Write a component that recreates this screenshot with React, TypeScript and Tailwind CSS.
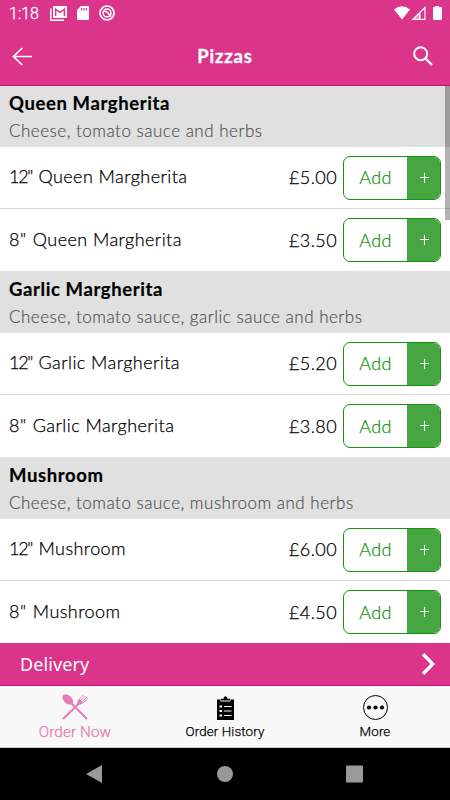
import React from 'react';

type Option = {
  size: string;
  price: string;
};

type Pizza = {
  name: string;
  description: string;
  options: Option[];
};

const pizzas: Pizza[] = [
  {
    name: 'Queen Margherita',
    description: 'Cheese, tomato sauce and herbs',
    options: [
      { size: '12"', price: '£5.00' },
      { size: '8"', price: '£3.50' },
    ],
  },
  {
    name: 'Garlic Margherita',
    description: 'Cheese, tomato sauce, garlic sauce and herbs',
    options: [
      { size: '12"', price: '£5.20' },
      { size: '8"', price: '£3.80' },
    ],
  },
  {
    name: 'Mushroom',
    description: 'Cheese, tomato sauce, mushroom and herbs',
    options: [
      { size: '12"', price: '£6.00' },
      { size: '8"', price: '£4.50' },
    ],
  },
];

const StatusBar: React.FC = () => {
  return (
    <div className="flex h-[26px] items-center pl-[9px] pr-[8px] font-[Roboto,sans-serif]">
      <span className="w-[41px] pt-[2px] text-[16px] font-light leading-none [-webkit-text-stroke:0.3px]">1:18</span>
      <svg width="17" height="15" viewBox="0 0 17 15" className="shrink-0">
        <path d="M.8 2.500v11.700H14" fill="none" stroke="#fff" strokeWidth="1.500" />
        <rect x="3" width="14" height="12" rx="1.200" fill="#fff" />
        <path d="M5.600 10V3.200L10 6.300l4.400-3.100V10" fill="none" stroke="#da358b" strokeWidth="1.500" />
      </svg>
      <svg width="12" height="14" viewBox="0 0 12 14" className="ml-[10px] shrink-0">
        <path fill="#fff" d="M4 0h6.700Q12 0 12 1.300v11.400Q12 14 10.700 14H1.300Q0 14 0 12.700V4Z" />
        <path stroke="#da358b" strokeWidth="1.200" d="M4.600 2v2.600M7 2v2.600M9.400 2v2.600" />
      </svg>
      <svg width="16" height="16" viewBox="0 0 16 16" fill="none" stroke="#fff" className="ml-[10px] shrink-0">
        <circle cx="8" cy="8" r="7" strokeWidth="1.700" />
        <circle cx="8" cy="8" r="3.900" strokeWidth="1.500" />
        <path d="M5 6 8 7l4 4.500" strokeWidth="1.700" />
      </svg>
      <svg width="48" height="15" viewBox="0 0 48 15" fill="#fff" className="ml-auto shrink-0">
        <path d="M0 3.500Q8-3.200 16 3.500L8 13.500Z" />
        <path fillRule="evenodd" d="M31.500 0v14H17.500ZM30.300 3V12.800H20.400Z" />
        <path d="M25 8.300 26.500 6.700V13H25Z" />
        <path d="M17.500 14 25 6.500V14Z" fillOpacity=".45" />
        <path d="M41 0h4v1h2q1 0 1 1v11q0 1-1 1h-7q-1 0-1-1V2q0-1 1-1h1Z" />
      </svg>
    </div>
  );
};

const Header: React.FC = () => {
  return (
    <header className="z-10 h-[86px] shrink-0 border-b border-[#d40a7c] bg-[#da358b] text-white">
      <StatusBar />
      <div className="grid h-[60px] grid-cols-[40px_1fr_40px] items-center px-[12px]">
        <svg width="20" height="19" viewBox="0 0 20 19" fill="none" stroke="#fff" strokeWidth="1.700">
          <path d="M10.300 1 1.500 9.500 10.300 18M1.500 9.500H20" />
        </svg>
        <h1 className="pt-px text-center text-[18.500px] font-bold tracking-[0.800px] [-webkit-text-stroke:0.3px]">Pizzas</h1>
        <svg width="20" height="20" viewBox="0 0 20 20" fill="none" stroke="#fff" className="ml-auto mr-[5px]">
          <circle cx="7.700" cy="7.700" r="6.500" strokeWidth="2" />
          <path d="m12.500 12.500 6.500 6.500" strokeWidth="2.400" />
        </svg>
      </div>
    </header>
  );
};

const AddButton: React.FC = () => {
  return (
    <button className="ml-[6px] flex h-[44px] w-[98px] overflow-hidden rounded-[7px] border border-[#16920f]">
      <span className="flex h-full flex-1 items-center justify-center tracking-[0.400px] text-[#16920f]">Add</span>
      <span className="flex h-full w-[33px] items-center justify-center bg-[#46a642]">
        <svg width="9" height="10" viewBox="0 0 9 10" stroke="#fff" strokeWidth="1.100" className="ml-[2px]">
          <path d="M4.500 0v10M0 4.500h9" />
        </svg>
      </span>
    </button>
  );
};

const PizzaSection: React.FC<{ pizza: Pizza }> = ({ pizza }) => {
  return (
    <section>
      <div className="h-[62px] bg-[#e0e0e0] px-[9px] pt-[5px]">
        <h2 className="text-[18.500px] font-bold leading-[26px] tracking-[0.600px] [-webkit-text-stroke:0.2px]">{pizza.name}</h2>
        <p className="pt-px text-[17px] font-light leading-[28px] tracking-[0.500px] text-[#555] [-webkit-text-stroke:0.2px]">
          {pizza.description}
        </p>
      </div>
      {pizza.options.map((option) => (
        <div
          key={option.size}
          className="flex h-[62px] items-center border-b border-[#dadada] px-[9px] text-[18px] font-light [-webkit-text-stroke:0.25px] last:border-b-0"
        >
          <span className="flex-1 pb-[2px] tracking-[0.440px]">
            <span className={option.size === '12"' ? 'mr-[1px] tracking-[-1.300px]' : 'mr-[1px]'}>{option.size}</span>
            {' '}{pizza.name}
          </span>
          <span className="tracking-[0.400px]">{option.price}</span>
          <AddButton />
        </div>
      ))}
    </section>
  );
};

const TabBar: React.FC = () => {
  return (
    <nav className="grid h-[62px] shrink-0 grid-cols-3 border-b border-[#ccc] bg-[#f8f8f8] font-[Roboto,sans-serif] font-light [-webkit-text-stroke:0.25px]">
      <a className="flex flex-col items-center pt-[8px] text-[#e77bb5]">
        <svg width="26" height="26" viewBox="0 0 26 26" fill="none" stroke="currentColor">
          <ellipse cx="5.800" cy="5.500" rx="6.200" ry="4" transform="rotate(43 5.800 5.500)" fill="currentColor" stroke="none" />
          <path d="M9 9 24.500 24.500" strokeWidth="2" strokeLinecap="round" />
          <path d="M1.500 24.500 17 9.500" strokeWidth="2" strokeLinecap="round" />
          <path d="M16 6.500q.8-1 1.500-1.500l3.500 3.500q-1 1.500-2.500 2-2 .8-3-.2-1-1.200.5-3.800Z" fill="currentColor" stroke="none" />
          <path d="M16.500 6 21.500.8M18.200 7l5-5M19.500 8.200l5-4.800M20.500 9.500l5-4.600" strokeWidth=".8" />
        </svg>
        <span className="text-[15.300px] leading-[24px] tracking-[0.1px]">Order Now</span>
      </a>
      <a className="flex flex-col items-center pt-[10px]">
        <svg width="17" height="24" viewBox="0 0 17 24">
          <path d="M0 3.500h3.500V5.500h10V3.500H17V24H0Z" />
          <path d="M4 4.500V2.800h2.500Q6.500.2 8.500.2t2 2.600H13v1.700Z" />
          <path stroke="#f8f8f8" strokeWidth="1.200" d="M7 10.500h7.500M7 15h7.500M7 19.500h7.500" />
          <path stroke="#f8f8f8" strokeWidth="2.200" d="M2.500 10.500h2.500M2.500 15h2.500M2.500 19.500h2.500" />
        </svg>
        <span className="text-[13.400px] leading-[24px] tracking-[0.1px]">Order History</span>
      </a>
      <a className="flex flex-col items-center pt-[9px]">
        <svg width="25" height="25" viewBox="0 0 25 25">
          <circle cx="12.500" cy="12.500" r="12" fill="none" stroke="#000" />
          <circle cx="6" cy="12.500" r="2.100" />
          <circle cx="12.500" cy="12.500" r="2.100" />
          <circle cx="19" cy="12.500" r="2.100" />
        </svg>
        <span className="text-[13.400px] leading-[24px] tracking-[0.1px]">More</span>
      </a>
    </nav>
  );
};

const App: React.FC = () => {
  return (
    <div className="flex h-[800px] w-[450px] flex-col overflow-hidden bg-white font-[Lato,sans-serif] text-black">
      <Header />
      <main className="relative -mt-px h-[558px] shrink-0 overflow-hidden">
        {pizzas.map((pizza) => (
          <PizzaSection key={pizza.name} pizza={pizza} />
        ))}
        <div className="absolute right-0 top-0 h-[135px] w-[5px] bg-black/30" />
      </main>
      <div className="flex h-[43px] shrink-0 items-center justify-between border-b border-[#d40a7c] bg-[#da358b] pl-[20px] pr-[15px] text-white">
        <span className="font-['Noto_Sans',sans-serif] text-[18px] tracking-[0.1px]">Delivery</span>
        <svg width="13" height="22" viewBox="0 0 13 22" fill="none" stroke="#fff" strokeWidth="3.400">
          <path d="m1.200 1.200 9.500 9.800-9.500 9.800" />
        </svg>
      </div>
      <TabBar />
      <div className="flex h-[52px] shrink-0 items-center bg-black">
        <svg width="450" height="52" viewBox="0 0 450 52" fill="#999">
          <path d="M86 26 102 17v18Z" />
          <circle cx="225" cy="26" r="8" />
          <rect x="346" y="17.500" width="17" height="17" rx="1" />
        </svg>
      </div>
    </div>
  );
};

export default App;
